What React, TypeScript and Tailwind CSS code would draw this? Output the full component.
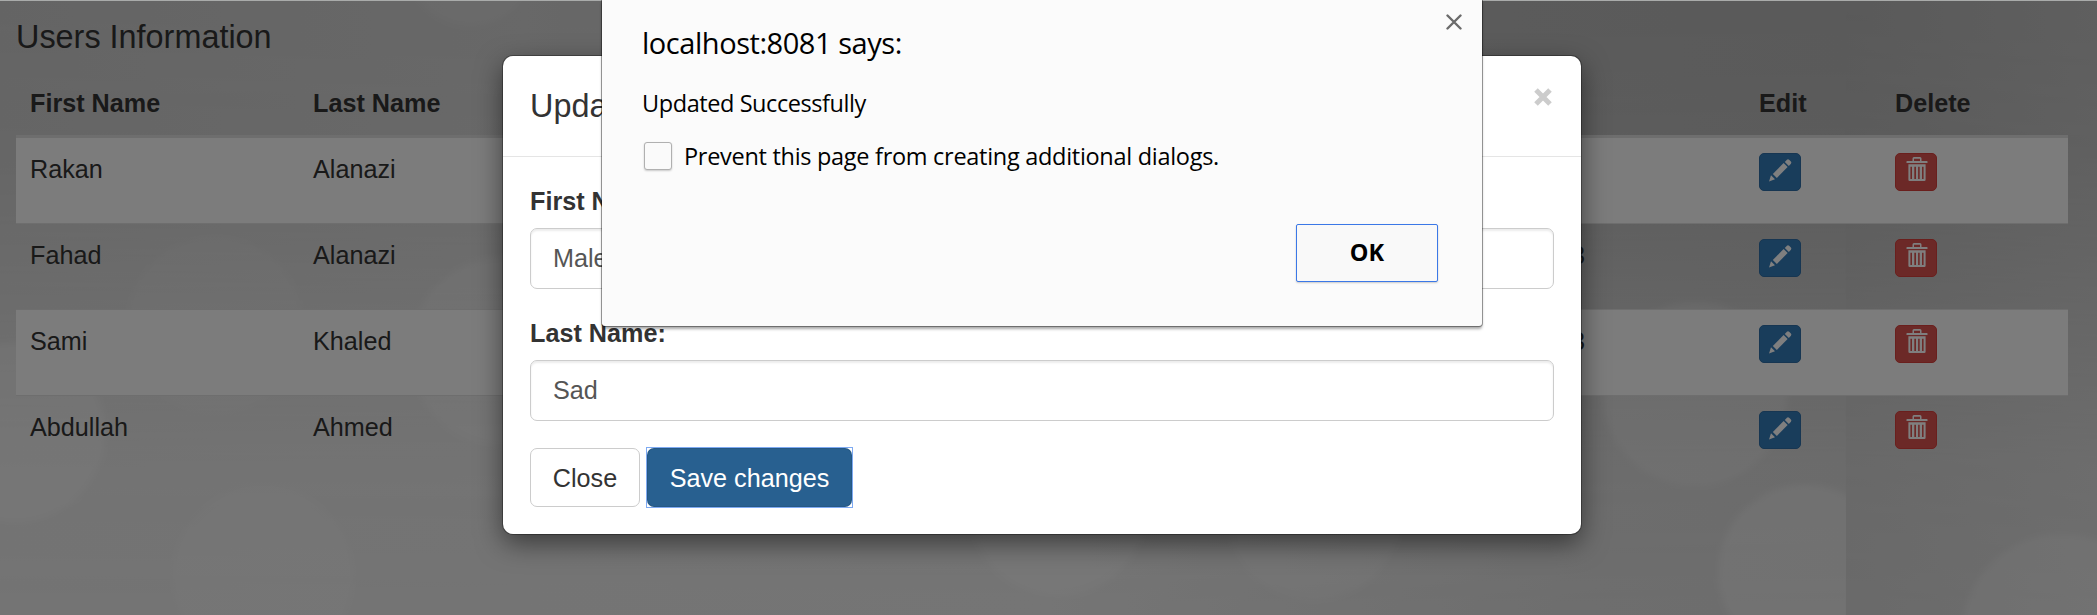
const users = [
  { first: 'Rakan', last: 'Alanazi', num: '' },
  { first: 'Fahad', last: 'Alanazi', num: '3' },
  { first: 'Sami', last: 'Khaled', num: '3' },
  { first: 'Abdullah', last: 'Ahmed', num: '' },
];

function Backdrop() {
  return (
    <svg className="absolute inset-0 h-full w-full" viewBox="0 0 2097 615" preserveAspectRatio="none" aria-hidden="true">
      <defs>
        <linearGradient id="top" x1="0" x2="1" y1="0" y2="0">
          <stop offset="0" stopColor="#c9c9c9" />
          <stop offset="0.25" stopColor="#d0d0d0" />
          <stop offset="0.72" stopColor="#b6b6b6" />
          <stop offset="0.88" stopColor="#b4b4b4" />
          <stop offset="1" stopColor="#bebebe" />
        </linearGradient>
        <linearGradient id="bottom" x1="0" x2="1" y1="0" y2="0">
          <stop offset="0" stopColor="#e8e8e8" />
          <stop offset="0.5" stopColor="#eaeaea" />
          <stop offset="0.76" stopColor="#dcdcdc" />
          <stop offset="0.88" stopColor="#dadada" />
          <stop offset="0.8804" stopColor="#d4d4d4" />
          <stop offset="1" stopColor="#dcdcdc" />
        </linearGradient>
        <linearGradient id="fade" x1="0" x2="0" y1="0" y2="1">
          <stop offset="0" stopColor="#000" />
          <stop offset="0.25" stopColor="#1c1c1c" />
          <stop offset="0.75" stopColor="#e8e8e8" />
          <stop offset="1" stopColor="#fff" />
        </linearGradient>
        <mask id="m">
          <rect width="2097" height="615" fill="url(#fade)" />
        </mask>
        <filter id="soft" x="-10%" y="-10%" width="120%" height="120%">
          <feGaussianBlur stdDeviation="3" />
        </filter>
        <clipPath id="tile">
          <rect width="1846" height="615" />
        </clipPath>
      </defs>
      <rect width="2097" height="615" fill="url(#top)" />
      <rect width="2097" height="615" fill="url(#bottom)" mask="url(#m)" />
      <g clipPath="url(#tile)" fill="#fff">
        <g filter="url(#soft)">
          <circle cx="15" cy="433" r="90" fillOpacity="0.24" />
          <circle cx="263" cy="576" r="90" fillOpacity="0.14" />
          <circle cx="215" cy="325" r="88" fillOpacity="0.08" />
          <circle cx="505" cy="352" r="95" fillOpacity="0.18" />
          <circle cx="470" cy="-38" r="64" fillOpacity="0.1" />
          <circle cx="1058" cy="508" r="88" fillOpacity="0.24" />
          <circle cx="1314" cy="512" r="88" fillOpacity="0.16" />
          <circle cx="1695" cy="394" r="92" fillOpacity="0.18" />
          <circle cx="1805" cy="572" r="87" fillOpacity="0.27" />
        </g>
      </g>
      <circle cx="2062" cy="634" r="100" fill="#fff" fillOpacity="0.22" filter="url(#soft)" />
    </svg>
  );
}

function PencilIcon() {
  return (
    <svg className="h-6 w-6" viewBox="0 0 24 24" fill="#fff" aria-hidden="true">
      <path d="M1 23.4 3 17.2 7 21.2Z" />
      <path d="M4.8 15.9 15.6 5.1 19.6 9.1 8.8 19.9Z" />
      <path d="M16.8 3.9 18.9 1.7Q20 .8 21.1 1.7L22.9 3.5Q23.9 4.6 22.9 5.7L20.8 7.9Z" />
    </svg>
  );
}

function TrashIcon() {
  return (
    <svg className="h-6 w-[22px]" viewBox="0 0 22 24" fill="#fff" aria-hidden="true">
      <path fillRule="evenodd" d="M1 4H6.5V1.5Q6.5 0 8 0H14Q15.500 0 15.500 1.500V4H21Q21.500 4 21.500 4.500V6H.5V4.500Q.5 4 1 4ZM8 1.700V4H14V1.700Z" />
      <path fillRule="evenodd" d="M2.400 7.300H19.600V22.700Q19.600 24 18.300 24H3.700Q2.400 24 2.400 22.700ZM4.400 9.700V22H6V9.700ZM8.300 9.700V22H10V9.700ZM12.100 9.700V22H13.700V9.700ZM16 9.700V22H17.600V9.700Z" />
    </svg>
  );
}

function UsersTable() {
  return (
    <div className="w-[2052px] text-[25.2px] leading-9 text-[#333]">
      <div className="grid h-[66px] grid-cols-[283px_1258px_188px_136px_1fr] border-b-[3px] border-[#ddd] pt-[13px] font-bold *:px-3.5">
        <div>First Name</div>
        <div>Last Name</div>
        <div />
        <div>Edit</div>
        <div>Delete</div>
      </div>
      {users.map((u, i) => (
        <div
          key={u.first}
          className={`grid grid-cols-[283px_1258px_188px_136px_1fr] pt-[13px] *:px-3.5 ${i === 0 ? 'h-[85px]' : 'h-[86px] border-t border-[#ddd]'} ${i % 2 === 0 ? 'bg-[#f9f9f9]' : ''}`}
        >
          <div>{u.first}</div>
          <div>{u.last}</div>
          <div>{u.num}</div>
          <div className="pt-0.5">
            <button className="flex h-[38px] w-[42px] items-center justify-center rounded-[5px] border border-[#2e6da4] bg-[#337ab7] pb-1">
              <PencilIcon />
            </button>
          </div>
          <div className="pt-0.5">
            <button className="flex h-[38px] w-[42px] items-center justify-center rounded-[5px] border border-[#d43f3a] bg-[#d9534f] pb-1.5 pl-0.5">
              <TrashIcon />
            </button>
          </div>
        </div>
      ))}
    </div>
  );
}

function Field({ label, value }: { label: string; value: string }) {
  return (
    <div className="mb-[26px] flex flex-col">
      <label className="mb-[9px] text-[25.2px] leading-9 font-bold text-[#333]">{label}</label>
      <div className="flex h-[61px] items-center rounded-[7px] border border-[#ccc] bg-white px-[22px] pb-px text-[25.2px] leading-9 text-[#555] shadow-[inset_0_2px_2px_rgba(0,0,0,0.075)]">
        {value}
      </div>
    </div>
  );
}

function UpdateModal() {
  return (
    <div className="h-[478px] w-[1078px] rounded-[10px] bg-white shadow-[0_0_0_1px_rgba(0,0,0,0.3),0_9px_27px_rgba(0,0,0,0.5)]">
      <div className="flex h-[101px] items-start justify-between border-b border-[#e5e5e5] px-[27px] pt-[27px]">
        <h4 className="text-[32.4px] leading-[46px] text-[#333]">Update</h4>
        <svg className="mt-[5px] mr-0.5 h-[18px] w-[18px]" viewBox="0 0 18 18" stroke="#ccc" strokeWidth="5" aria-hidden="true">
          <path d="M2 2 16 16M16 2 2 16" />
        </svg>
      </div>
      <div className="px-[27px] pt-[26px]">
        <Field label="First Name:" value="Malek" />
        <Field label="Last Name:" value="Sad" />
        <div className="mt-[27px] flex gap-[7px] text-[25.2px] leading-9">
          <button className="h-[59px] w-[110px] rounded-[7px] border border-[#ccc] bg-white text-[#333]">Close</button>
          <div className="h-[59px] w-[205px] outline outline-[#7eaaf2]">
            <button className="h-full w-full rounded-[7px] border border-[#204d74]/40 bg-[#286090] text-white">Save changes</button>
          </div>
        </div>
      </div>
    </div>
  );
}

function BrowserAlert() {
  return (
    <div className="flex h-[326px] w-[880px] flex-col rounded-b-[3px] bg-[#fbfbfb] pr-[44px] pl-10 font-['Open_Sans','Noto_Sans',sans-serif] text-black shadow-[0_0_0_1px_rgba(0,0,0,0.35),0_3px_3px_rgba(0,0,0,0.35)]">
      <div className="flex items-start justify-between">
        <p className="mt-[22px] text-[29px] leading-[42px] tracking-[-0.45px]">localhost:8081 says:</p>
        <svg className="mt-[14px] -mr-[24px] h-4 w-4" viewBox="0 0 16 16" stroke="#6b6b6b" strokeWidth="2.4" strokeLinecap="round" aria-hidden="true">
          <path d="M1.500 1.500 14.500 14.500M14.500 1.500 1.500 14.500" />
        </svg>
      </div>
      <p className="mt-[21px] text-[23.5px] leading-9 tracking-[-0.42px]">Updated Successfully</p>
      <label className="mt-[17px] flex items-center gap-3 pl-0.5 text-[23.5px] leading-9 tracking-[-0.29px]">
        <span className="h-7 w-7 rounded-[3px] border border-[#b0b0b0] bg-[#fafafa] shadow-[0_1px_2px_rgba(0,0,0,0.2)]" />
        Prevent this page from creating additional dialogs.
      </label>
      <button className="mt-[50px] h-[58px] w-[142px] self-end rounded-[2px] border border-[#3b78e7] bg-[#f9f9f9] pb-0.5 text-[23.5px] leading-9 font-bold shadow-[0_1px_2px_rgba(0,0,0,0.2)]">
        OK
      </button>
    </div>
  );
}

export default function App() {
  return (
    <div className="relative h-[615px] w-[2097px] overflow-hidden font-['Liberation_Sans',Arial,sans-serif]">
      <Backdrop />
      <main className="relative px-4 pt-[14px]">
        <h4 className="mb-3 text-[32.4px] leading-[46px] text-[#333]">Users Information</h4>
        <UsersTable />
      </main>
      <div className="absolute inset-0 bg-black/50 pt-[56px] pl-[503px]">
        <UpdateModal />
      </div>
      <div className="absolute inset-x-0 top-0 border-t border-[#a9abaa] pl-[602px]">
        <div className="-mt-px">
          <BrowserAlert />
        </div>
      </div>
    </div>
  );
}
